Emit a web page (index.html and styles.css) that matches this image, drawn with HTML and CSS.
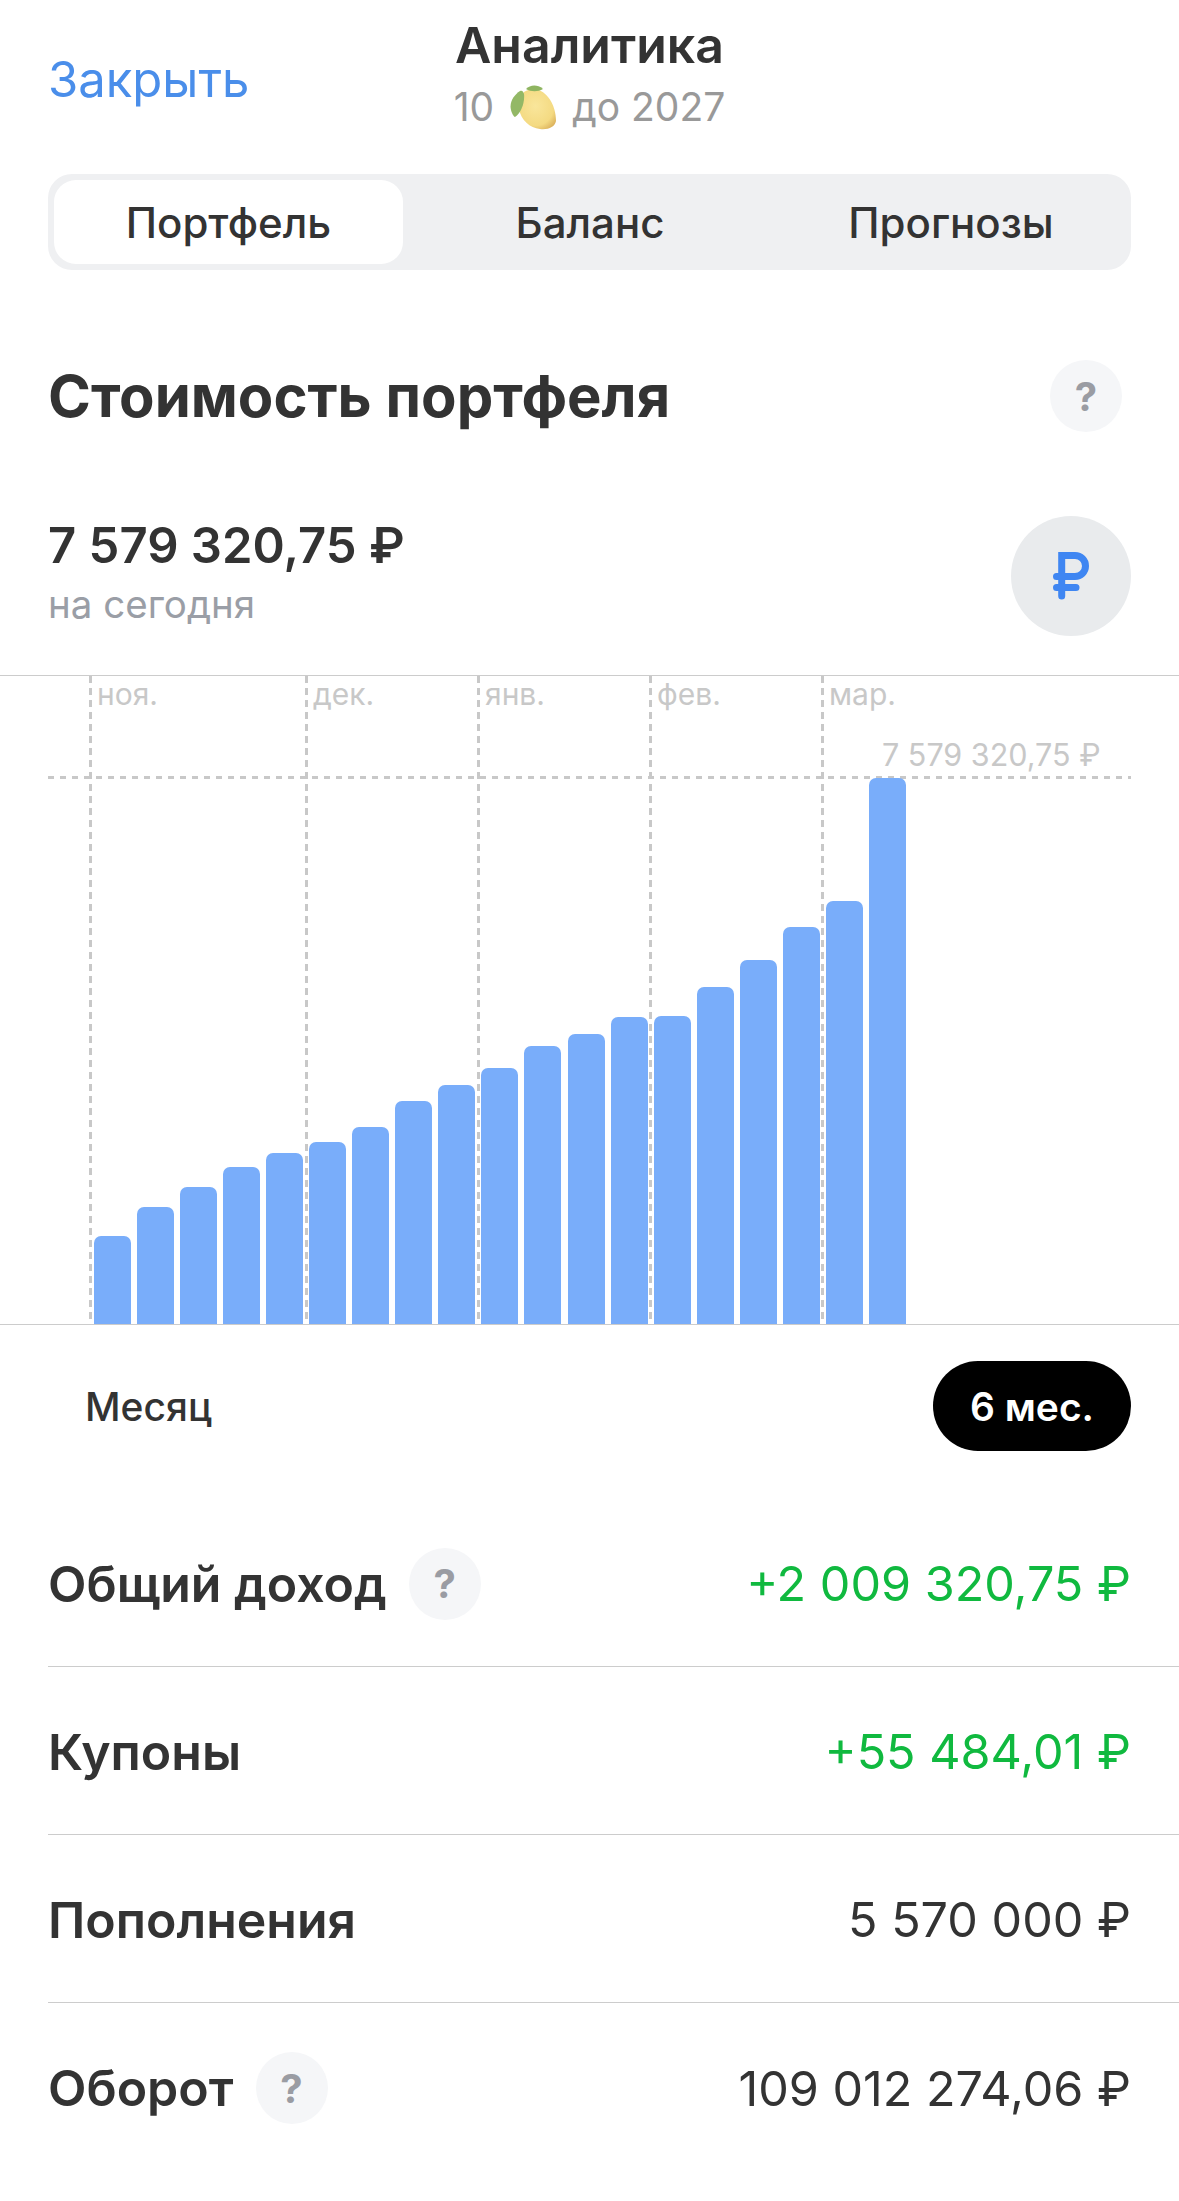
FILE: index.html
```html
<!DOCTYPE html>
<html lang="ru">
<head>
<meta charset="utf-8">
<title>Аналитика</title>
<link rel="stylesheet" href="styles.css">
</head>
<body>
<div class="page">
  <header class="top">
    <a class="close">Закрыть</a>
    <div class="heading">
      <div class="heading-title">Аналитика</div>
      <div class="heading-sub">
        <span>10</span>
        <svg class="lemon" viewBox="0 0 46 46" aria-hidden="true">
          <defs>
            <radialGradient id="lem" cx="45%" cy="42%" r="68%">
              <stop offset="0" stop-color="#f9e69b"/>
              <stop offset="0.72" stop-color="#f4da82"/>
              <stop offset="1" stop-color="#dcb25c"/>
            </radialGradient>
          </defs>
          <path d="M14 8C22 3 32 5 38 13C44 20 46 30 46 37C45 43 38 46 30 45C20 44 11 36 9 25C8 18 10 12 14 8Z" fill="url(#lem)"/>
          <path d="M10 7C4 11 -1 18 1 26C2 30 4 33 5 33C11 29 15 19 14 10C13 7 12 6 10 7Z" fill="#93b866"/>
          <path d="M16 5C20 1 27 0 33 5C28 8 21 8 16 5Z" fill="#8fb561"/>
        </svg>
        <span>до 2027</span>
      </div>
    </div>
  </header>

  <nav class="tabs">
    <div class="tab tab-active">Портфель</div>
    <div class="tab tab-mid">Баланс</div>
    <div class="tab tab-last">Прогнозы</div>
  </nav>

  <section class="title-row">
    <h1 class="title">Стоимость портфеля</h1>
    <span class="help">?</span>
  </section>

  <section class="value-row">
    <div class="value-text">
      <div class="value">7 579 320,75 ₽</div>
      <div class="value-note">на сегодня</div>
    </div>
    <div class="currency">
      <svg class="currency-icon" viewBox="0 0 36 48" aria-hidden="true">
        <path d="M8.7 44V3.5H22A10.5 10.5 0 0 1 22 24.5H3.5M3.5 35.5H23" fill="none" stroke="#3f86f2" stroke-width="7" stroke-linecap="round" stroke-linejoin="miter"/>
      </svg>
    </div>
  </section>

  <section class="chart">
    <div class="months">
      <div class="month month-wide">ноя.</div>
      <div class="month">дек.</div>
      <div class="month">янв.</div>
      <div class="month">фев.</div>
      <div class="month">мар.</div>
    </div>
    <div class="max-line"></div>
    <div class="max-label">7 579 320,75 ₽</div>
    <div class="bars">
      <div class="bar" style="height:88px"></div>
      <div class="bar" style="height:117px"></div>
      <div class="bar" style="height:137px"></div>
      <div class="bar" style="height:157px"></div>
      <div class="bar" style="height:171px"></div>
      <div class="bar" style="height:182px"></div>
      <div class="bar" style="height:197px"></div>
      <div class="bar" style="height:223px"></div>
      <div class="bar" style="height:239px"></div>
      <div class="bar" style="height:256px"></div>
      <div class="bar" style="height:278px"></div>
      <div class="bar" style="height:290px"></div>
      <div class="bar" style="height:307px"></div>
      <div class="bar" style="height:308px"></div>
      <div class="bar" style="height:337px"></div>
      <div class="bar" style="height:364px"></div>
      <div class="bar" style="height:397px"></div>
      <div class="bar" style="height:423px"></div>
      <div class="bar" style="height:546px"></div>
    </div>
  </section>

  <section class="periods">
    <span class="period">Месяц</span>
    <span class="period period-active">6 мес.</span>
  </section>

  <section class="stats">
    <div class="stat">
      <div class="stat-label">Общий доход <span class="help">?</span></div>
      <div class="stat-value stat-plus">+2 009 320,75 ₽</div>
    </div>
    <div class="stat">
      <div class="stat-label">Купоны</div>
      <div class="stat-value stat-plus">+55 484,01 ₽</div>
    </div>
    <div class="stat">
      <div class="stat-label">Пополнения</div>
      <div class="stat-value">5 570 000 ₽</div>
    </div>
    <div class="stat">
      <div class="stat-label">Оборот <span class="help">?</span></div>
      <div class="stat-value">109 012 274,06 ₽</div>
    </div>
  </section>
</div>
</body>
</html>
```
FILE: styles.css
```css
* { box-sizing: border-box; }
html, body { margin: 0; padding: 0; background: #fff; }
body {
  font-family: Inter, "Noto Sans", "Liberation Sans", sans-serif;
  color: #333333;
  width: 1179px;
  height: 2201px;
  overflow: hidden;
}
.page { width: 1179px; }

.top {
  height: 174px;
  padding: 18px 48px 0;
  display: grid;
  grid-template-columns: 1fr auto 1fr;
}
.close {
  grid-column: 1;
  font-size: 49px;
  line-height: 60px;
  margin-top: 32px;
  color: #4a8eea;
}
.heading { grid-column: 2; text-align: center; }
.heading-title { font-size: 50px; font-weight: 600; line-height: 54px; }
.heading-sub {
  display: flex;
  align-items: center;
  justify-content: center;
  gap: 16px;
  margin-top: 12px;
  font-size: 39px;
  line-height: 46px;
  color: #999999;
}
.lemon { width: 46px; height: 46px; flex: none; }

.tabs {
  margin: 0 48px;
  height: 96px;
  padding: 6px;
  display: flex;
  background: #eff0f2;
  border-radius: 24px;
}
.tab {
  display: flex;
  align-items: center;
  justify-content: center;
  font-size: 42px;
  font-weight: 500;
}
.tab-active { width: 349px; background: #fff; border-radius: 22px; }
.tab-mid { width: 374px; }
.tab-last { width: 348px; }

.title-row {
  margin: 90px 48px 0 48px;
  padding-right: 9px;
  height: 72px;
  display: flex;
  align-items: center;
  justify-content: space-between;
}
.title { margin: 0; font-size: 58px; font-weight: 700; line-height: 72px; }
.help {
  width: 72px;
  height: 72px;
  flex: none;
  border-radius: 50%;
  background: #f5f6f8;
  color: #9a9ca3;
  display: inline-flex;
  align-items: center;
  justify-content: center;
  font-size: 40px;
  font-weight: 700;
}

.value-row {
  margin: 84px 48px 0;
  height: 120px;
  display: flex;
  align-items: center;
  justify-content: space-between;
}
.value-text { align-self: flex-start; padding-top: 3px; }
.value { font-size: 49px; font-weight: 600; line-height: 54px; }
.value-note { margin-top: 9px; font-size: 38.5px; line-height: 44px; color: #9a9ea6; }
.currency {
  width: 120px;
  height: 120px;
  border-radius: 50%;
  background: #e9ebed;
  display: flex;
  align-items: center;
  justify-content: center;
}
.currency-icon { width: 36px; height: 48px; }

.chart {
  position: relative;
  margin-top: 39px;
  height: 650px;
  border-top: 1px solid #cccccc;
  border-bottom: 1px solid #cccccc;
}
.months {
  position: absolute;
  inset: 0;
  padding-left: 89px;
  display: flex;
}
.month {
  width: 172px;
  padding: 1px 0 0 8px;
  font-size: 30px;
  line-height: 34px;
  color: #c8c8c8;
  background: repeating-linear-gradient(to bottom, #c8c8c8 0 7px, transparent 7px 12px) left top / 3px 100% no-repeat;
}
.month-wide { width: 216px; }
.max-line {
  position: absolute;
  top: 100px;
  left: 48px;
  width: 1083px;
  height: 3px;
  background: repeating-linear-gradient(to right, #c8c8c8 0 6px, transparent 6px 12px);
}
.max-label {
  position: absolute;
  top: 61px;
  left: 882px;
  font-size: 30.5px;
  line-height: 36px;
  color: #c8c8c8;
  white-space: nowrap;
}
.bars {
  position: relative;
  height: 100%;
  padding-left: 94px;
  display: flex;
  align-items: flex-end;
  gap: 6.05px;
}
.bar {
  width: 37px;
  flex: none;
  background: #79adfa;
  border-radius: 7px 7px 0 0;
}

.periods {
  margin: 36px 48px 0;
  height: 90px;
  display: flex;
  align-items: center;
  justify-content: space-between;
}
.period { padding-left: 37px; font-size: 39px; font-weight: 500; }
.period-active {
  width: 198px;
  height: 90px;
  padding: 0;
  border-radius: 45px;
  background: #000;
  color: #fff;
  display: flex;
  align-items: center;
  justify-content: center;
  font-weight: 600;
}

.stats { margin-top: 48px; padding-left: 48px; }
.stat {
  height: 168px;
  padding: 2px 48px 0 0;
  border-bottom: 1px solid #cccccc;
  display: flex;
  align-items: center;
  justify-content: space-between;
}
.stat:last-child { border-bottom: 0; }
.stat-label {
  display: flex;
  align-items: center;
  gap: 22px;
  font-size: 50px;
  font-weight: 600;
}
.stat-value { font-size: 48.5px; }
.stat-plus { color: #10b93f; }
```
